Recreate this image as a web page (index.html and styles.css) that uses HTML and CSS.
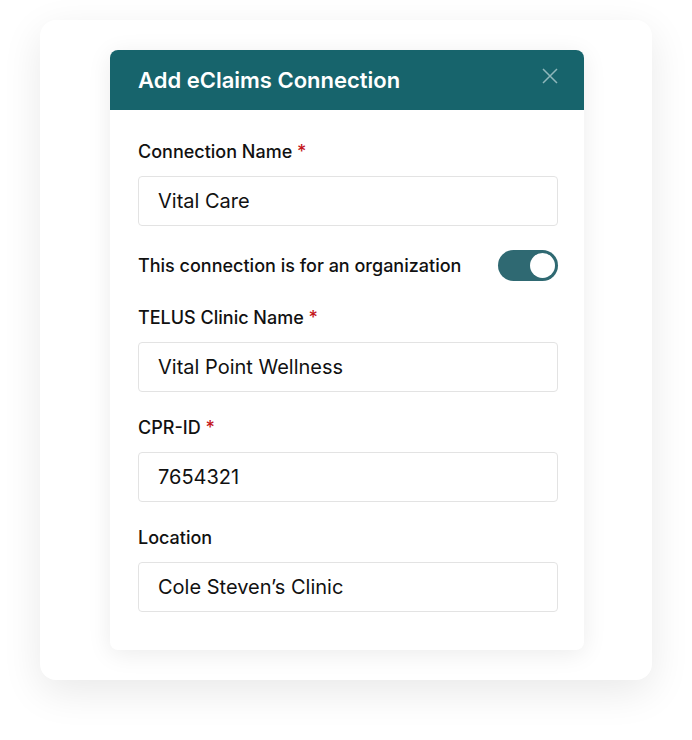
FILE: index.html
```html
<!DOCTYPE html>
<html lang="en">
<head>
<meta charset="UTF-8">
<meta name="viewport" content="width=device-width, initial-scale=1.0">
<title>Add eClaims Connection</title>
<link rel="stylesheet" href="styles.css">
</head>
<body>
<div class="frame">
    <div class="modal">
        <div class="modal-header">
            <h2>Add eClaims Connection</h2>
            <button class="close" aria-label="Close">
                <svg width="16" height="16" viewBox="0 0 16 16">
                    <path d="M1 1 L15 15 M15 1 L1 15" stroke="currentColor" stroke-width="1.5" fill="none"/>
                </svg>
            </button>
        </div>
        <form class="modal-body">
            <label class="field-label">Connection Name <span class="req">*</span></label>
            <input class="field" type="text" value="Vital Care">

            <div class="toggle-row">
                <span>This connection is for an organization</span>
                <span class="switch"><span class="knob"></span></span>
            </div>

            <label class="field-label">TELUS Clinic Name <span class="req">*</span></label>
            <input class="field" type="text" value="Vital Point Wellness">

            <label class="field-label">CPR-ID <span class="req">*</span></label>
            <input class="field" type="text" value="7654321">

            <label class="field-label">Location</label>
            <input class="field" type="text" value="Cole Steven’s Clinic">
        </form>
    </div>
</div>
</body>
</html>
```

FILE: styles.css
```css
body {
    margin: 0;
    padding: 20px 40px 60px;
    background-color: #fff;
    font-family: Inter, "Noto Sans", sans-serif;
    color: #111;
}
.frame {
    width: 612px;
    height: 660px;
    box-sizing: border-box;
    padding: 30px 70px;
    background-color: #fff;
    border-radius: 16px;
    box-shadow: 0 12px 40px rgba(0, 0, 0, 0.09);
}
.modal {
    width: 474px;
    height: 600px;
    background-color: #fff;
    border-radius: 8px;
    overflow: hidden;
    box-shadow: 0 4px 24px rgba(0, 0, 0, 0.08);
}
.modal-header {
    height: 60px;
    background-color: #17646c;
    display: flex;
    align-items: center;
    justify-content: space-between;
    padding: 0 26px 0 28px;
}
.modal-header h2 {
    margin: 0;
    color: #fff;
    font-size: 22px;
    font-weight: 600;
    margin-top: -1px;
}
.close {
    background: none;
    border: none;
    padding: 0;
    color: #8fb7bb;
    display: flex;
    margin-top: -8px;
}
.modal-body {
    padding: 31px 26px 0 28px;
    display: flex;
    flex-direction: column;
}
.field-label {
    font-size: 18px;
    font-weight: 500;
    line-height: 22px;
    margin-bottom: 13px;
}
.req {
    color: #c4161c;
}
.field {
    height: 50px;
    box-sizing: border-box;
    border: 1px solid #e3e3e3;
    border-radius: 4px;
    padding: 0 19px;
    font-family: Inter, "Noto Sans", sans-serif;
    font-size: 20px;
    color: #111;
    margin-bottom: 25px;
    outline: none;
}
.toggle-row {
    display: flex;
    align-items: center;
    justify-content: space-between;
    font-size: 18px;
    font-weight: 500;
    margin-top: -1px;
    margin-bottom: 26px;
}
.switch {
    width: 60px;
    height: 31px;
    border-radius: 16px;
    background-color: #2f6972;
    display: flex;
    align-items: center;
    justify-content: flex-end;
    padding: 0 3px;
    box-sizing: border-box;
}
.knob {
    width: 25px;
    height: 25px;
    border-radius: 50%;
    background-color: #fff;
}
```
